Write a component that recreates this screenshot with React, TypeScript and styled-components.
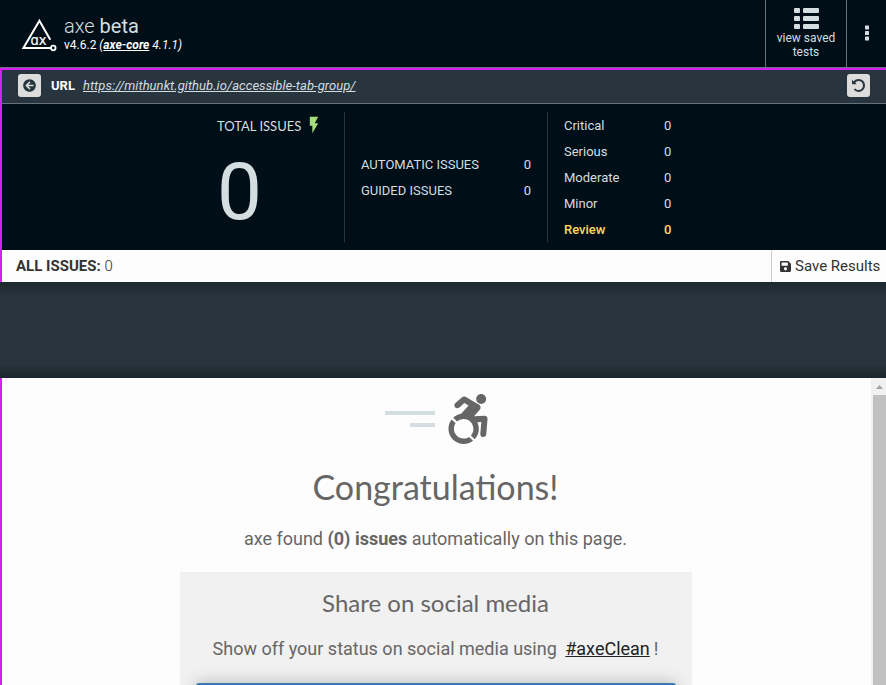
import React from "react";
import styled, { createGlobalStyle } from "styled-components";
import { FaAccessibleIcon, FaArrowCircleLeft, FaSave } from "react-icons/fa";
import { MdFlashOn } from "react-icons/md";

const Global = createGlobalStyle`
  * { box-sizing: border-box; }
  body { margin: 0; overflow: hidden; background: #000f17; }
  a { color: inherit; text-decoration: underline; }
  p, h1, h2 { margin: 0; font-weight: 400; }
  button { border: 0; margin: 0; padding: 0; font: inherit; color: inherit; background: none; }
`;

const Page = styled.div`
  width: 886px;
  height: 685px;
  overflow: hidden;
  display: flex;
  flex-direction: column;
  font-family: Roboto, sans-serif;
  font-size: 13px;
  color: #d4dde0;
  background: #000f17;
`;

const Header = styled.header`
  height: 68px;
  flex: none;
  display: flex;
  border-bottom: 1px solid #66737b;
`;

const Brand = styled.div`
  flex: 1;
  display: flex;
  padding: 15px 0 0 21px;
`;

const Logo = styled.svg`
  width: 36px;
  height: 36px;
  margin: 2px 7px 0 0;
`;

const Title = styled.h1`
  font-size: 20px;
  line-height: 23px;
  b { font-weight: 400; }
`;

const Light = styled.span`
  font-weight: 300;
`;

const Version = styled.div`
  font-size: 12px;
  line-height: 14px;
  color: #fff;
  a { font-weight: 700; }
`;

const SavedTests = styled.button`
  width: 82px;
  border-left: 1px solid #66737b;
  border-right: 1px solid #66737b;
  display: flex;
  flex-direction: column;
  align-items: center;
  padding-top: 8px;
  font-size: 12px;
  line-height: 14px;
  svg { width: 25px; height: 21px; margin-bottom: 2px; }
`;

const MoreButton = styled.button`
  width: 39px;
  display: flex;
  justify-content: center;
  padding: 25px 0 0 0;
  svg { width: 4px; height: 16px; }
`;

const Upper = styled.section`
  height: 214px;
  flex: none;
  border-left: 2px solid #d71ef7;
  border-top: 2px solid #d71ef7;
`;

const UrlBar = styled.div`
  height: 34px;
  display: flex;
  align-items: center;
  padding: 0 16px;
  padding-bottom: 2px;
  background: #28353e;
  border-bottom: 1px solid #66737b;
`;

const SquareButton = styled.button`
  width: 23px;
  height: 23px;
  border-radius: 3px;
  display: flex;
  align-items: center;
  justify-content: center;
  background: #dcdcdc;
  color: #28353e;
`;

const UrlLabel = styled.strong`
  margin: 0 8px 0 10px;
  color: #fff;
`;

const UrlLink = styled.a`
  flex: 1;
  font-style: italic;
  letter-spacing: 0.05px;
`;

const Summary = styled.div`
  height: 146px;
  padding-top: 8px;
  display: flex;
`;

const Total = styled.div`
  width: 343px;
  height: 130px;
  padding-left: 215px;
  border-right: 1px solid #28353e;
`;

const TotalLabel = styled.div`
  display: flex;
  align-items: center;
  height: 27px;
  font-family: Lato, sans-serif;
  font-size: 13px;
  svg { width: 20px; height: 20px; color: #a6de7a; margin: -1px 0 0 3px; }
`;

const TotalNumber = styled.div`
  font-size: 80px;
  line-height: 94px;
  margin-top: 6px;
  width: 46px;
`;

const Kinds = styled.div`
  width: 203px;
  height: 130px;
  border-right: 1px solid #28353e;
  padding: 39px 16px 0;
`;

const Severities = styled.div`
  width: 140px;
  padding-left: 16px;
`;

const Row = styled.div<{ $review?: boolean }>`
  height: 26px;
  line-height: 27px;
  display: flex;
  justify-content: space-between;
  font-weight: ${(p) => (p.$review ? 500 : 400)};
  color: ${(p) => (p.$review ? "#fed761" : "#d4dde0")};
`;

const Count = styled.span`
  width: 24px;
`;

const IssuesBar = styled.div`
  height: 32px;
  display: flex;
  align-items: center;
  justify-content: space-between;
  padding-left: 14px;
  background: #fdfdfe;
  color: #333;
  font-size: 15px;
  line-height: 32px;
`;

const SaveButton = styled.button`
  width: 115px;
  height: 32px;
  display: flex;
  align-items: center;
  border-left: 1px solid #ccc;
  padding-left: 8px;
  svg { width: 11px; height: 13px; margin-right: 4px; }
`;

const Gap = styled.div`
  height: 96px;
  flex: none;
  background: linear-gradient(#1d272e, #28353e 14px, #28353e 82px, #1b252b);
`;

const Results = styled.section`
  flex: 1;
  display: flex;
  border-left: 2px solid #d71ef7;
  background: #fdfdfe;
  color: #666;
`;

const Content = styled.div`
  width: 869px;
  padding-right: 2px;
  display: flex;
  flex-direction: column;
  align-items: center;
  text-align: center;
`;

const Hero = styled.div`
  display: flex;
  width: 102px;
  height: 50px;
  margin-top: 16px;
  svg { width: 44px; height: 50px; flex: none; }
`;

const SpeedLines = styled.div`
  display: flex;
  flex-direction: column;
  align-items: flex-end;
  gap: 8px;
  width: 50px;
  padding-top: 17px;
  margin-right: 11px;
`;

const SpeedLine = styled.i<{ $w: number }>`
  width: ${(p) => p.$w}px;
  height: 4px;
  background: #d4dde0;
`;

const Congrats = styled.h2`
  font-family: Lato, sans-serif;
  font-size: 34px;
  line-height: 44px;
  margin-top: 21px;
`;

const Found = styled.p`
  font-size: 18px;
  line-height: 24px;
  margin-top: 18px;
`;

const Share = styled.div`
  width: 512px;
  height: 113px;
  margin-top: 21px;
  padding: 16px 16px 0;
  background: #f1f1f1;
  overflow: hidden;
`;

const ShareTitle = styled.h2`
  font-family: Lato, sans-serif;
  font-size: 24px;
  line-height: 30px;
`;

const ShareText = styled.p`
  font-size: 18px;
  line-height: 24px;
  margin-top: 19px;
  a { color: #222; margin: 0 -0.5px 0 4px; }
`;

const ShareButton = styled.div`
  height: 40px;
  margin-top: 22px;
  border-radius: 3px;
  background: #3b7ab0;
  box-shadow: 0 0 16px rgba(0, 0, 0, 0.25);
`;

const Scrollbar = styled.div`
  width: 15px;
  display: flex;
  flex-direction: column;
  align-items: flex-end;
  background: #f1f1f1;
  svg { width: 15px; height: 17px; flex: none; }
`;

const Thumb = styled.div`
  width: 13px;
  flex: 1;
  background: #c1c1c1;
`;

const severities = ["Critical", "Serious", "Moderate", "Minor", "Review"];

export default function App() {
  return (
    <Page>
      <Global />
      <Header>
        <Brand>
          <Logo viewBox="0 0 36 36" fill="none" stroke="#fff" strokeWidth="2">
            <path d="M31 31H2.4L18.4 3.8L29.3 22.8" />
            <circle cx="32.3" cy="31" r="2.3" strokeWidth="1.7" fill="#000f17" />
            <text
              x="9.5"
              y="28"
              fill="#fff"
              stroke="#fff"
              strokeWidth=".2"
              fontFamily="DejaVu Sans"
              fontSize="14"
              textLength="16"
              lengthAdjust="spacingAndGlyphs"
            >ɑx</text>
          </Logo>
          <div>
            <Title><Light>axe</Light> <b>beta</b></Title>
            <Version>v4.6.2 <i>(<a>axe-core</a> 4.1.1)</i></Version>
          </div>
        </Brand>
        <SavedTests>
          <svg viewBox="0 0 25 21" fill="#d4dde0">
            {[0, 8, 16].map((y) => (
              <React.Fragment key={y}>
                <rect x="0" y={y} width="6" height="5" rx="1" />
                <rect x="9" y={y} width="16" height="5" rx="1" />
              </React.Fragment>
            ))}
          </svg>
          <span>view saved<br />tests</span>
        </SavedTests>
        <MoreButton>
          <svg viewBox="0 0 4 16" fill="#d4dde0">
            {[0.5, 6, 11.5].map((y) => <rect key={y} y={y} width="4" height="4" rx="0.6" />)}
          </svg>
        </MoreButton>
      </Header>

      <Upper>
        <UrlBar>
          <SquareButton><FaArrowCircleLeft size={13} /></SquareButton>
          <UrlLabel>URL</UrlLabel>
          <UrlLink>https://mithunkt.github.io/accessible-tab-group/</UrlLink>
          <SquareButton>
            <svg width="13" height="13" viewBox="0 0 13 13" fill="none" stroke="#28353e" strokeWidth="2">
              <path d="M2 3.8C3.1 2 4.7 1 6.6 1C9.6 1 12 3.4 12 6.4S9.6 12 6.6 12C4.9 12 3.5 11.3 2.5 10" />
              <path d="M0 .8V5.3H4.7Z" fill="#28353e" stroke="none" />
            </svg>
          </SquareButton>
        </UrlBar>
        <Summary>
          <Total>
            <TotalLabel>TOTAL ISSUES<MdFlashOn /></TotalLabel>
            <TotalNumber>0</TotalNumber>
          </Total>
          <Kinds>
            <Row><span>AUTOMATIC ISSUES</span><span>0</span></Row>
            <Row><span>GUIDED ISSUES</span><span>0</span></Row>
          </Kinds>
          <Severities>
            {severities.map((s) => (
              <Row key={s} $review={s === "Review"}><span>{s}</span><Count>0</Count></Row>
            ))}
          </Severities>
        </Summary>
        <IssuesBar>
          <span><b>ALL ISSUES:</b> <Light>0</Light></span>
          <SaveButton><FaSave /><span>Save Results</span></SaveButton>
        </IssuesBar>
      </Upper>

      <Gap />

      <Results>
        <Content>
          <Hero>
            <SpeedLines><SpeedLine $w={50} /><SpeedLine $w={25} /></SpeedLines>
            <FaAccessibleIcon />
          </Hero>
          <Congrats>Congratulations!</Congrats>
          <Found>axe found <b>(0) issues</b> automatically on this page.</Found>
          <Share>
            <ShareTitle>Share on social media</ShareTitle>
            <ShareText>Show off your status on social media using <a>#axeClean</a> !</ShareText>
            <ShareButton />
          </Share>
        </Content>
        <Scrollbar>
          <svg viewBox="0 0 15 17"><path d="M5 11L8.5 7L12 11Z" fill="#a3a3a3" /></svg>
          <Thumb />
        </Scrollbar>
      </Results>
    </Page>
  );
}
